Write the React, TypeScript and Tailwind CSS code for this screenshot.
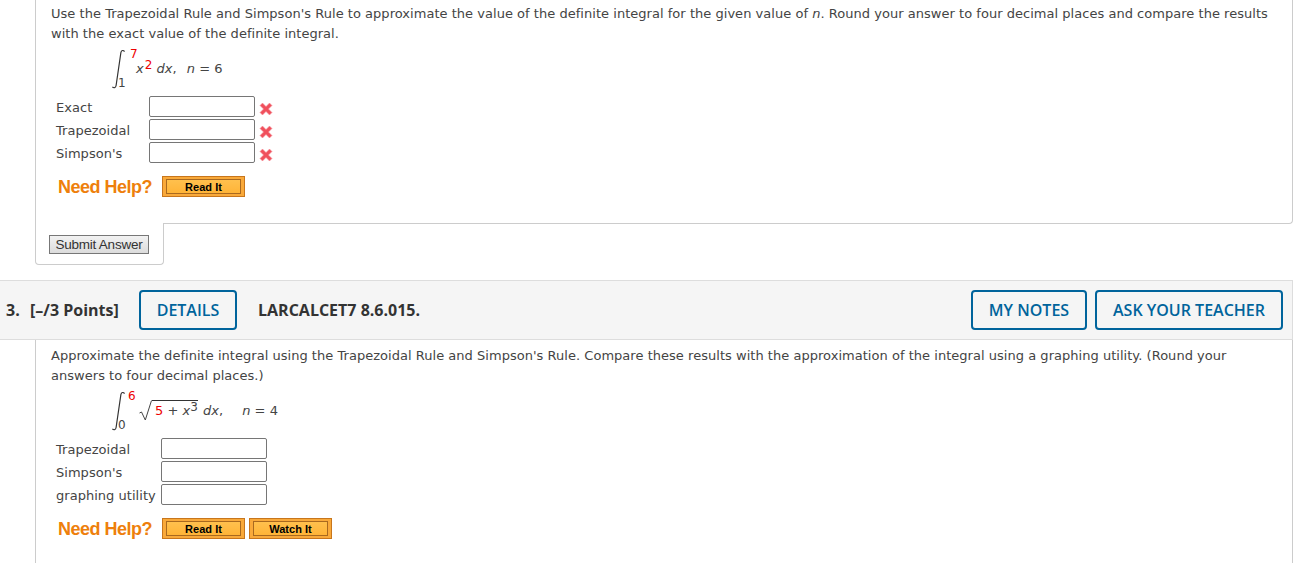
import React, { FC } from "react";

const ErrorMark: FC = () => (
  <svg width="14" height="14" viewBox="0 0 14 14" className="ml-[4px] mt-[5px] shrink-0">
    <path d="M1 3.5 3.5 1 7 4.5 10.5 1 13 3.5 9.5 7 13 10.5 10.5 13 7 9.5 3.5 13 1 10.5 4.5 7Z" fill="#f0505c" stroke="#f79aa2" strokeWidth="0.6" />
  </svg>
);

const AnswerRow: FC<{ label: string; labelWidth: string; wrong?: boolean }> = ({ label, labelWidth, wrong }) => (
  <div className="flex items-center h-[23px]">
    <span className={`${labelWidth} pt-[2px] shrink-0`}>{label}</span>
    <div className="w-[106px] h-[21px] border border-[#767676] rounded-[2px] bg-white shrink-0" />
    {wrong && <ErrorMark />}
  </div>
);

const HelpButton: FC<{ label: string; width: string }> = ({ label, width }) => (
  <div className={`${width} h-[21px] py-[2px] px-[3px] bg-[#f9a93a] border border-[#c8761c]`}>
    <div className="h-full bg-gradient-to-b from-[#ffc04d] to-[#ffb437] border border-[#a9691f] flex items-center justify-center text-[11px] font-bold text-black font-['Liberation_Sans',Arial,sans-serif]">
      {label}
    </div>
  </div>
);

const NeedHelp: FC<{ watch?: boolean }> = ({ watch }) => (
  <div className="flex items-center ml-[22px] gap-[4px]">
    <span className="w-[100px] whitespace-nowrap text-[18px] tracking-[-0.5px] font-bold text-[#ee7f0c] font-['Liberation_Sans',Arial,sans-serif]">Need Help?</span>
    <HelpButton label="Read It" width="w-[83px]" />
    {watch && <HelpButton label="Watch It" width="w-[83px]" />}
  </div>
);

const OutlineButton: FC<{ label: string; width: string }> = ({ label, width }) => (
  <div className={`${width} h-[40px] border-2 border-[#00649c] rounded-[4px] flex items-center justify-center text-[16px] font-semibold text-[#00649c]`}>
    {label}
  </div>
);

const Integral: FC<{ upper: string; upperLeft: string; lower: string; children: React.ReactNode }> = ({ upper, upperLeft, lower, children }) => (
  <div className="flex items-center h-[45px]">
    <div className="relative w-[24px] h-[45px] shrink-0">
      <svg width="15" height="45" viewBox="0 0 15 45" className="absolute left-[-1px] top-0">
        <path d="M13.5 4.6C12.6 3 10.3 3 9.9 5.5L5.1 38.5C4.7 41.2 2.6 41.2 1.4 39.8" fill="none" stroke="#333" strokeWidth="1.2" />
      </svg>
      <span className={`absolute ${upperLeft} top-0 text-[12px] leading-[14px] text-[#ee0000]`}>{upper}</span>
      <span className="absolute left-[6px] top-[29px] text-[12px] leading-[14px]">{lower}</span>
    </div>
    {children}
  </div>
);

const App: FC = () => {
  return (
    <div className="w-[1299px] h-[563px] overflow-hidden bg-white text-[13px] leading-[20px] tracking-[0.03px] text-[#444] font-['DejaVu_Sans',Verdana,sans-serif]">
      <div className="ml-[35px] mr-[6px] h-[224px] pt-[4px] border-x border-b border-[#ccc] rounded-br-[4px]">
        <div className="ml-[15px] whitespace-nowrap">
          <p>Use the Trapezoidal Rule and Simpson's Rule to approximate the value of the definite integral for the given value of <i>n</i>. Round your answer to four decimal places and compare the results</p>
          <p>with the exact value of the definite integral.</p>
        </div>
        <div className="ml-[76px] mt-[3px]">
          <Integral upper="7" upperLeft="left-[18px]" lower="1">
            <span className="-mt-[2px]"><i>x</i><sup className="top-[-4px] ml-[1px] text-[#ee0000] text-[12px]">2</sup> <i>dx</i>,<span className="ml-[10px]"><i>n</i> = 6</span></span>
          </Integral>
        </div>
        <div className="ml-[20px] mt-[3px]">
          <AnswerRow label="Exact" labelWidth="w-[93px]" wrong />
          <AnswerRow label="Trapezoidal" labelWidth="w-[93px]" wrong />
          <AnswerRow label="Simpson's" labelWidth="w-[93px]" wrong />
        </div>
        <div className="mt-[12px]">
          <NeedHelp />
        </div>
      </div>
      <div className="relative ml-[35px] w-[129px] h-[42px] -mt-px bg-white border-x border-b border-[#ccc] rounded-b-[4px] pt-[12px] pl-[13px]">
        <div className="w-[100px] h-[19px] border border-[#777] bg-gradient-to-b from-[#f2f2f2] to-[#dcdcdc] flex items-center justify-center tracking-[-0.25px] text-[13.5px] text-[#333] font-['Liberation_Sans',Arial,sans-serif]">
          Submit Answer
        </div>
      </div>
      <div className="mt-[15px] mr-[6px] h-[60px] bg-[#f5f5f5] border-y border-r border-[#ddd] flex items-center pl-[6px] pr-[9px] tracking-normal text-[16px] text-[#333] font-['Open_Sans',sans-serif]">
        <span className="font-bold w-[24px]">3.</span>
        <span className="font-bold w-[109px]">[–/3 Points]</span>
        <OutlineButton label="DETAILS" width="w-[98px]" />
        <span className="font-bold ml-[21px]">LARCALCET7 8.6.015.</span>
        <div className="ml-auto flex gap-[8px]">
          <OutlineButton label="MY NOTES" width="w-[116px]" />
          <OutlineButton label="ASK YOUR TEACHER" width="w-[188px]" />
        </div>
      </div>
      <div className="ml-[35px] mr-[6px] h-[224px] pt-[6px] border-x border-[#ccc]">
        <p className="ml-[15px] w-[1225px]">
          Approximate the definite integral using the Trapezoidal Rule and Simpson's Rule. Compare these results with the approximation of the integral using a graphing utility. (Round your answers to four decimal places.)
        </p>
        <div className="ml-[76px] mt-[3px]">
          <Integral upper="6" upperLeft="left-[16px]" lower="0">
            <span className="flex items-start ml-[3px] -mt-[2px]">
              <svg width="13" height="21" viewBox="0 0 13 21" className="shrink-0">
                <path d="M0.5 13 2.5 12 6.3 20 12.5 0.5" fill="none" stroke="#444" strokeWidth="1" />
              </svg>
              <span className="border-t border-[#333] pl-[3px] leading-[20px] whitespace-nowrap">
                <span className="text-[#ee0000]">5</span> + <i>x</i><sup className="top-[-4px] text-[12px]">3</sup>
              </span>
              <span className="ml-[5px] pt-[1px]"><i>dx</i>,</span>
              <span className="ml-[19px] pt-[1px]"><i>n</i> = 4</span>
            </span>
          </Integral>
        </div>
        <div className="ml-[20px] mt-[3px]">
          <AnswerRow label="Trapezoidal" labelWidth="w-[105px]" />
          <AnswerRow label="Simpson's" labelWidth="w-[105px]" />
          <AnswerRow label="graphing utility" labelWidth="w-[105px]" />
        </div>
        <div className="mt-[12px]">
          <NeedHelp watch />
        </div>
      </div>
    </div>
  );
};

export default App;
